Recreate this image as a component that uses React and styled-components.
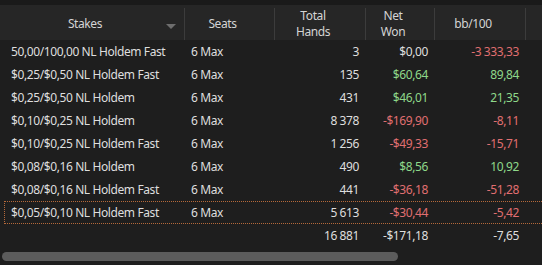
import styled, { createGlobalStyle } from "styled-components";

const GlobalStyle = createGlobalStyle`
  html, body {
    margin: 0;
    padding: 0;
    background: #1e1e1e;
  }
  body {
    font-family: "Noto Sans", "Open Sans", sans-serif;
    font-size: 12px;
    letter-spacing: -0.4px;
  }
`;

const columns = [
  { key: "stakes", label: "Stakes", width: 185, align: "left", sorted: true },
  { key: "seats", label: "Seats", width: 90, align: "left" },
  { key: "hands", label: ["Total", "Hands"], width: 91, align: "right" },
  { key: "won", label: ["Net", "Won"], width: 69, align: "right", colored: true },
  { key: "bb", label: "bb/100", width: 91, align: "right", colored: true },
];

const rows = [
  { stakes: "50,00/100,00 NL Holdem Fast", seats: "6 Max", hands: "3", won: "$0,00", bb: "-3 333,33" },
  { stakes: "$0,25/$0,50 NL Holdem Fast", seats: "6 Max", hands: "135", won: "$60,64", bb: "89,84" },
  { stakes: "$0,25/$0,50 NL Holdem", seats: "6 Max", hands: "431", won: "$46,01", bb: "21,35" },
  { stakes: "$0,10/$0,25 NL Holdem", seats: "6 Max", hands: "8 378", won: "-$169,90", bb: "-8,11" },
  { stakes: "$0,10/$0,25 NL Holdem Fast", seats: "6 Max", hands: "1 256", won: "-$49,33", bb: "-15,71" },
  { stakes: "$0,08/$0,16 NL Holdem", seats: "6 Max", hands: "490", won: "$8,56", bb: "10,92" },
  { stakes: "$0,08/$0,16 NL Holdem Fast", seats: "6 Max", hands: "441", won: "-$36,18", bb: "-51,28" },
  { stakes: "$0,05/$0,10 NL Holdem Fast", seats: "6 Max", hands: "5 613", won: "-$30,44", bb: "-5,42", selected: true },
];

const totals = { stakes: "", seats: "", hands: "16 881", won: "-$171,18", bb: "-7,65" };

function tone(value) {
  if (value.startsWith("-")) return "neg";
  if (/[1-9]/.test(value)) return "pos";
  return "zero";
}

function App() {
  return (
    <>
      <GlobalStyle />
      <Panel>
        <TopStrip />
        <Header>
          {columns.map((col) => (
            <HeaderCell key={col.key} $width={col.width}>
              <HeaderLabel>
                {Array.isArray(col.label)
                  ? col.label.map((line) => <span key={line}>{line}</span>)
                  : col.label}
              </HeaderLabel>
              {col.sorted && <SortArrow />}
            </HeaderCell>
          ))}
          <Filler />
        </Header>
        <Body>
          {rows.map((row) => (
            <Row key={row.stakes} $selected={row.selected}>
              {columns.map((col) => (
                <Cell
                  key={col.key}
                  $width={col.width}
                  $align={col.align}
                  $tone={col.colored ? tone(row[col.key]) : "zero"}
                >
                  {row[col.key]}
                </Cell>
              ))}
            </Row>
          ))}
          <Row>
            {columns.map((col) => (
              <Cell key={col.key} $width={col.width} $align={col.align} $tone="zero">
                {totals[col.key]}
              </Cell>
            ))}
          </Row>
        </Body>
        <ScrollTrack>
          <ScrollThumb />
        </ScrollTrack>
      </Panel>
    </>
  );
}

const Panel = styled.div`
  width: 542px;
  height: 265px;
  background: #1e1e1e;
  color: #dcdcdc;
  display: flex;
  flex-direction: column;
  overflow: hidden;
`;

const TopStrip = styled.div`
  height: 5px;
  background: #1a1a1a;
`;

const Header = styled.div`
  display: flex;
  height: 35px;
  background: #262626;
`;

const HeaderCell = styled.div`
  position: relative;
  width: ${(p) => p.$width}px;
  flex: none;
  display: flex;
  align-items: center;
  justify-content: center;
  padding-right: 14px;
  box-sizing: border-box;
  border-right: 1px solid #3c3c3c;
  margin: 3px 0 0;
  color: #d4d4d4;
`;

const HeaderLabel = styled.div`
  display: flex;
  flex-direction: column;
  align-items: center;
  line-height: 16px;
  margin-top: -1px;
`;

const SortArrow = styled.div`
  position: absolute;
  right: 8px;
  top: 16px;
  width: 0;
  height: 0;
  border-left: 5px solid transparent;
  border-right: 5px solid transparent;
  border-top: 5px solid #6e6e6e;
`;

const Filler = styled.div`
  flex: 1;
`;

const Body = styled.div`
  display: flex;
  flex-direction: column;
`;

const Row = styled.div`
  display: flex;
  height: 23px;
  align-items: center;
  box-sizing: border-box;
  margin-left: 4px;
  border: 1px ${(p) => (p.$selected ? "dotted #b5693a" : "solid transparent")};
  border-right: none;
`;

const Cell = styled.div`
  width: ${(p) => p.$width}px;
  flex: none;
  box-sizing: border-box;
  padding: ${(p) => (p.$align === "right" ? "0 7px 0 0" : "0 0 0 6px")};
  text-align: ${(p) => p.$align};
  white-space: nowrap;
  color: ${(p) =>
    p.$tone === "neg" ? "#e06f71" : p.$tone === "pos" ? "#8fd88a" : "#dedede"};

  &:first-child {
    width: ${(p) => p.$width - 5}px;
  }
`;

const ScrollTrack = styled.div`
  margin-top: 5px;
  height: 9px;
  padding: 0 2px;
`;

const ScrollThumb = styled.div`
  width: 396px;
  height: 9px;
  border-radius: 5px;
  background: #5c5c5c;
`;

export default App;
